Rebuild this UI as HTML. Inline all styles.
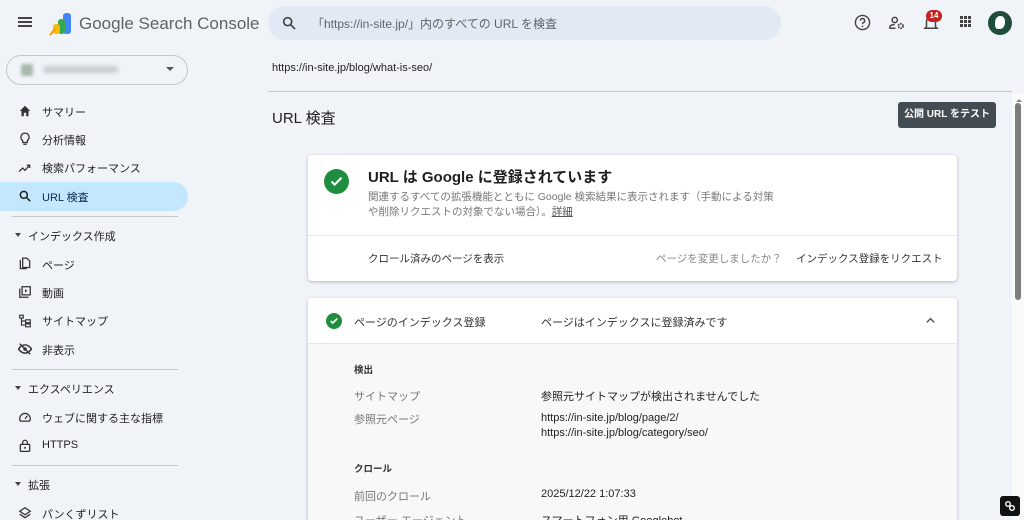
<!DOCTYPE html>
<html><head><meta charset="utf-8"><style>
*{box-sizing:border-box;margin:0;padding:0}
html,body{width:1024px;height:520px;overflow:hidden}
body{background:#f0f4f9;font-family:"Liberation Sans","Noto Sans CJK JP",sans-serif;color:#1f1f1f;position:relative}
.abs{position:absolute}
.nav{position:absolute;left:42px;font-size:11px;color:#1f1f1f}
.ic{position:absolute;left:18px}
.sec{position:absolute;left:14px;font-size:11px;color:#1f1f1f}
.hr{position:absolute;left:12px;width:166px;height:1px;background:#c7c7c7}
.card{position:absolute;background:#fff;border-radius:4px;box-shadow:0 1px 3px rgba(0,0,0,.25)}
.lbl{position:absolute;left:354px;font-size:11px;color:#777}
.val{position:absolute;left:541px;font-size:11px;color:#1f1f1f}
</style></head><body>
<div class="abs" style="left:18px;top:17px;width:14px;height:2px;background:#444;box-shadow:0 4px 0 #444,0 8px 0 #444"></div>
<svg class="abs" style="left:49px;top:12px" width="24" height="24" viewBox="0 0 24 24"><rect x="14" y="1" width="8" height="21" rx="3" fill="#4285f4"/><rect x="9" y="7" width="7" height="15" rx="3" fill="#34a853"/><rect x="4" y="12" width="7" height="10" rx="3" fill="#fbbc04"/><path d="M1 23 L6 17" stroke="#f29900" stroke-width="2"/></svg>
<div class="abs" style="left:79px;top:14px;font-size:17px;color:#5f6368">Google Search Console</div>
<div class="abs" style="left:268px;top:6px;width:513px;height:34px;border-radius:17px;background:#e3e9f4"></div>
<svg class="abs" style="left:281px;top:15px" width="16" height="16" viewBox="0 0 24 24"><circle cx="10" cy="10" r="6" fill="none" stroke="#444" stroke-width="2.5"/><path d="M14.5 14.5 L21 21" stroke="#444" stroke-width="2.5"/></svg>
<div class="abs" style="left:312px;top:15px;font-size:12px;color:#5f6368">「https://in-site.jp/」内のすべての URL を検査</div>
<svg class="abs" style="left:854px;top:14px" width="17" height="17" viewBox="0 0 24 24"><circle cx="12" cy="12" r="10" fill="none" stroke="#444" stroke-width="2"/><path d="M9 9.5a3 3 0 1 1 4 2.8c-1 .4-1 1-1 2" fill="none" stroke="#444" stroke-width="2"/><circle cx="12" cy="17.5" r="1.2" fill="#444"/></svg>
<svg class="abs" style="left:888px;top:14px" width="18" height="18" viewBox="0 0 24 24"><circle cx="9" cy="8" r="3.5" fill="none" stroke="#444" stroke-width="2"/><path d="M2 19c0-4 4-5 7-5" fill="none" stroke="#444" stroke-width="2"/><path d="M2 19h8" stroke="#444" stroke-width="2"/><circle cx="17" cy="16" r="3" fill="none" stroke="#444" stroke-width="2.5" stroke-dasharray="2 1.2"/></svg>
<svg class="abs" style="left:922px;top:14px" width="18" height="18" viewBox="0 0 24 24"><path d="M6 17V10a6 6 0 0 1 12 0v7l2 2H4z" fill="none" stroke="#444" stroke-width="2"/></svg>
<div class="abs" style="left:926px;top:10px;width:16px;height:12px;border-radius:6px;background:#c5221f;color:#fff;font-size:8px;font-weight:bold;text-align:center;line-height:12px">14</div>
<div class="abs" style="left:960px;top:16px;width:3px;height:3px;background:#444;box-shadow:4px 0 #444,8px 0 #444,0 4px #444,4px 4px #444,8px 4px #444,0 8px #444,4px 8px #444,8px 8px #444"></div>
<div class="abs" style="left:988px;top:11px;width:24px;height:24px;border-radius:50%;background:#1e4d3c"></div>
<div class="abs" style="left:995px;top:16px;width:10px;height:13px;border-radius:50% 40% 50% 30%;background:#fff"></div>
<div class="abs" style="left:6px;top:55px;width:182px;height:30px;border:1px solid #c4c7c5;border-radius:15px"></div>
<div class="abs" style="left:21px;top:64px;width:12px;height:12px;background:#a8b8ae;border-radius:2px;filter:blur(1.5px)"></div>
<div class="abs" style="left:43px;top:66px;width:75px;height:7px;background:#c8ccd0;border-radius:3px;filter:blur(2px)"></div>
<div class="abs" style="left:166px;top:67px;border:4px solid transparent;border-top:4px solid #555"></div>
<svg class="ic" style="top:104px" width="14" height="14" viewBox="0 0 24 24"><path d="M3 12L12 3l9 9h-3v9h-4v-6h-4v6H6v-9z" fill="#333"/></svg>
<div class="nav" style="top:104px">サマリー</div>
<svg class="ic" style="top:132px" width="14" height="14" viewBox="0 0 24 24"><path d="M12 2a7 7 0 0 0-4 12.7V18h8v-3.3A7 7 0 0 0 12 2zM9 21h6" fill="none" stroke="#333" stroke-width="2.2"/></svg>
<div class="nav" style="top:132px">分析情報</div>
<svg class="ic" style="top:161px" width="14" height="14" viewBox="0 0 24 24"><path d="M2 18l6-6 4 4 8-9M15 7h5v5" fill="none" stroke="#333" stroke-width="2.2"/></svg>
<div class="nav" style="top:160px">検索パフォーマンス</div>
<div class="abs" style="left:0;top:182px;width:188px;height:29px;border-radius:0 15px 15px 0;background:#c2e7ff"></div>
<svg class="ic" style="top:189px" width="14" height="14" viewBox="0 0 24 24"><circle cx="10" cy="10" r="6" fill="none" stroke="#222" stroke-width="2.6"/><path d="M14.5 14.5L21 21" stroke="#222" stroke-width="2.6"/></svg>
<div class="nav" style="top:189px;color:#0b2a4a">URL 検査</div>
<div class="hr" style="top:216px"></div>
<div class="abs" style="left:15px;top:233px;border:3px solid transparent;border-top:4px solid #444"></div>
<div class="sec" style="left:28px;top:228px">インデックス作成</div>
<svg class="ic" style="top:257px" width="14" height="14" viewBox="0 0 24 24"><path d="M4 5v15h11M8 2h7l5 5v11H8z" fill="none" stroke="#333" stroke-width="2.2"/></svg>
<div class="nav" style="top:257px">ページ</div>
<svg class="ic" style="top:285px" width="14" height="14" viewBox="0 0 24 24"><path d="M3 6v15h15M7 3h14v14H7z" fill="none" stroke="#333" stroke-width="2.2"/><path d="M12 7v6l4-3z" fill="#333"/></svg>
<div class="nav" style="top:285px">動画</div>
<svg class="ic" style="top:314px" width="14" height="14" viewBox="0 0 24 24"><path d="M3 2h6v5H3zM13 10h8v5h-8zM13 17h8v5h-8zM6 7v12h7M6 12h7" fill="none" stroke="#333" stroke-width="2"/></svg>
<div class="nav" style="top:313px">サイトマップ</div>
<svg class="ic" style="top:342px" width="14" height="14" viewBox="0 0 24 24"><path d="M1 12s4-7 11-7 11 7 11 7-4 7-11 7S1 12 1 12z" fill="none" stroke="#333" stroke-width="2.5"/><circle cx="12" cy="12" r="3" fill="#333"/><path d="M3 3l18 18" stroke="#333" stroke-width="2.5"/></svg>
<div class="nav" style="top:342px">非表示</div>
<div class="hr" style="top:369px"></div>
<div class="abs" style="left:15px;top:386px;border:3px solid transparent;border-top:4px solid #444"></div>
<div class="sec" style="left:28px;top:381px">エクスペリエンス</div>
<svg class="ic" style="top:410px" width="14" height="14" viewBox="0 0 24 24"><path d="M4 19a9 9 0 1 1 16 0z" fill="none" stroke="#333" stroke-width="2.2"/><path d="M12 15l4-5" stroke="#333" stroke-width="2.2"/></svg>
<div class="nav" style="top:410px">ウェブに関する主な指標</div>
<svg class="ic" style="top:438px" width="14" height="15" viewBox="0 0 24 24"><rect x="4" y="10" width="16" height="12" rx="1" fill="none" stroke="#333" stroke-width="2.2"/><path d="M8 10V7a4 4 0 0 1 8 0v3" fill="none" stroke="#333" stroke-width="2.2"/><circle cx="12" cy="16" r="1.6" fill="#333"/></svg>
<div class="nav" style="top:439px">HTTPS</div>
<div class="hr" style="top:465px"></div>
<div class="abs" style="left:15px;top:482px;border:3px solid transparent;border-top:4px solid #444"></div>
<div class="sec" style="left:28px;top:477px">拡張</div>
<svg class="ic" style="top:506px" width="14" height="14" viewBox="0 0 24 24"><path d="M12 3l9 6-9 6-9-6zM3 14l9 6 9-6" fill="none" stroke="#333" stroke-width="2.2"/></svg>
<div class="nav" style="top:506px">パンくずリスト</div>
<div class="abs" style="left:272px;top:62px;font-size:11px;color:#1f1f1f">https://in-site.jp/blog/what-is-seo/</div>
<div class="abs" style="left:268px;top:91px;width:744px;height:1px;background:#c7c7c7"></div>
<div class="abs" style="left:272px;top:107px;font-size:15px;color:#1f1f1f">URL 検査</div>
<div class="abs" style="left:898px;top:102px;width:98px;height:26px;background:#444c53;border-radius:3px;color:#fff;font-size:10px;font-weight:bold;text-align:center;line-height:26px">公開 URL をテスト</div>
<div class="abs" style="left:1012px;top:94px;width:12px;height:426px;background:#fafafa"></div>
<div class="abs" style="left:1015px;top:103px;width:6px;height:197px;background:#7c7c7c;border-radius:3px"></div>
<div class="abs" style="left:1016px;top:96px;border:3px solid transparent;border-bottom:3px solid #888"></div>
<div class="card" style="left:308px;top:155px;width:649px;height:126px"></div>
<div class="abs" style="left:324px;top:169px;width:25px;height:25px;border-radius:50%;background:#1e8e3e"></div>
<svg class="abs" style="left:329px;top:174px" width="15" height="15" viewBox="0 0 24 24"><path d="M4 12l5 5L20 6" fill="none" stroke="#fff" stroke-width="3.5"/></svg>
<div class="abs" style="left:368px;top:166px;font-size:15px;font-weight:bold;color:#1f1f1f">URL は Google に登録されています</div>
<div class="abs" style="left:368px;top:190px;width:408px;font-size:10.5px;line-height:15px;color:#777">関連するすべての拡張機能とともに Google 検索結果に表示されます（手動による対策や削除リクエストの対象でない場合）。<u style="color:#555">詳細</u></div>
<div class="abs" style="left:308px;top:235px;width:649px;height:1px;background:#e6e6e6"></div>
<div class="abs" style="left:368px;top:251px;font-size:10.5px;color:#333">クロール済みのページを表示</div>
<div class="abs" style="left:656px;top:251px;font-size:10.5px;color:#888">ページを変更しましたか？</div>
<div class="abs" style="left:796px;top:251px;font-size:10.5px;color:#333">インデックス登録をリクエスト</div>
<div class="card" style="left:308px;top:298px;width:649px;height:240px;background:#f8f8f8"></div>
<div class="abs" style="left:308px;top:298px;width:649px;height:46px;background:#fff;border-bottom:1px solid #e6e6e6;border-radius:4px 4px 0 0"></div>
<div class="abs" style="left:326px;top:313px;width:16px;height:16px;border-radius:50%;background:#1e8e3e"></div>
<svg class="abs" style="left:329px;top:316px" width="10" height="10" viewBox="0 0 24 24"><path d="M4 12l5 5L20 6" fill="none" stroke="#fff" stroke-width="4"/></svg>
<div class="abs" style="left:354px;top:314px;font-size:11px;color:#333">ページのインデックス登録</div>
<div class="abs" style="left:541px;top:314px;font-size:11px;color:#333">ページはインデックスに登録済みです</div>
<svg class="abs" style="left:925px;top:316px" width="11" height="9" viewBox="0 0 12 8"><path d="M2 6l4-4 4 4" fill="none" stroke="#555" stroke-width="1.6"/></svg>
<div class="abs" style="left:354px;top:362px;font-size:9.5px;font-weight:bold;color:#333">検出</div>
<div class="lbl" style="top:388px">サイトマップ</div>
<div class="val" style="top:388px">参照元サイトマップが検出されませんでした</div>
<div class="lbl" style="top:411px">参照元ページ</div>
<div class="val" style="top:411px;line-height:15px">https://in-site.jp/blog/page/2/<br>https://in-site.jp/blog/category/seo/</div>
<div class="abs" style="left:354px;top:461px;font-size:9.5px;font-weight:bold;color:#333">クロール</div>
<div class="lbl" style="top:488px">前回のクロール</div>
<div class="val" style="top:488px">2025/12/22 1:07:33</div>
<div class="lbl" style="top:512px">ユーザー エージェント</div>
<div class="val" style="top:512px">スマートフォン用 Googlebot</div>
<div class="abs" style="left:1000px;top:496px;width:20px;height:20px;background:#111;border-radius:3px"></div>
<svg class="abs" style="left:1003px;top:499px" width="14" height="14" viewBox="0 0 14 14"><circle cx="5" cy="5" r="2.3" fill="none" stroke="#fff" stroke-width="1.4"/><circle cx="9" cy="9" r="2.3" fill="none" stroke="#fff" stroke-width="1.4"/></svg>
</body></html>
